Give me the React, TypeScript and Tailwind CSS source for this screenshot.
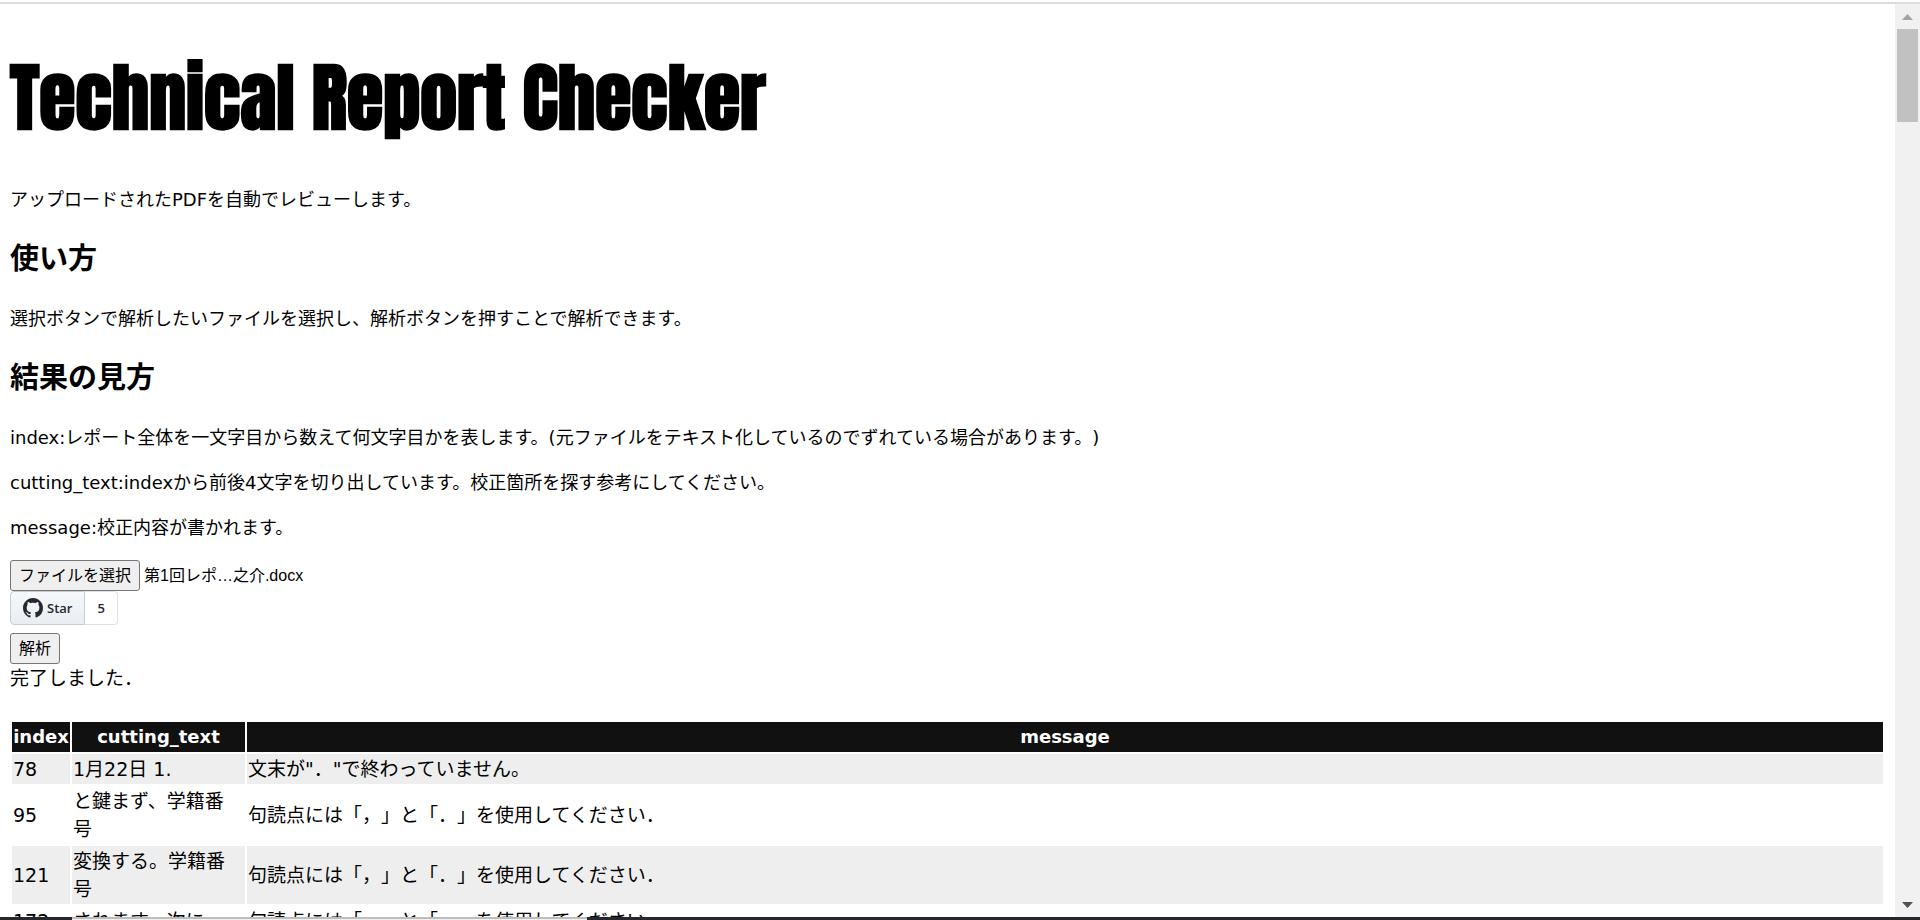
const rows = [
  { index: 78, text: '1月22日 1.', message: '文末が"．"で終わっていません。' },
  { index: 95, text: 'と鍵まず、学籍番号', message: '句読点には「，」と「．」を使用してください．' },
  { index: 121, text: '変換する。学籍番号', message: '句読点には「，」と「．」を使用してください．' },
  { index: 172, text: 'されます、次に', message: '句読点には「，」と「．」を使用してください．' },
];

const buttonClass =
  'flex h-[31px] items-center rounded-[3px] border border-[#767676] bg-[#efefef] px-2 text-base leading-none';
const cellClass = 'py-px pr-1 pl-px';

function StarButton() {
  return (
    <div className="mb-2 flex h-[34px] font-['Open_Sans',sans-serif] text-[13px] font-semibold text-[#24292e]">
      <a href="#star" className="flex items-center gap-1 rounded-l-[4px] border border-[#c5ccd3] bg-linear-to-b from-[#f6f8fa] to-[#e9eef3] px-3">
        <svg viewBox="0 0 16 16" className="size-5" fill="currentColor" aria-hidden="true">
          <path d="M8 0C3.58 0 0 3.58 0 8c0 3.54 2.29 6.53 5.47 7.59.4.07.55-.17.55-.38 0-.19-.01-.82-.01-1.49-2.01.37-2.53-.49-2.69-.94-.09-.23-.48-.94-.82-1.13-.28-.15-.68-.52-.01-.53.63-.01 1.08.58 1.23.82.72 1.21 1.87.87 2.33.66.07-.52.28-.87.51-1.07-1.78-.2-3.64-.89-3.64-3.95 0-.87.31-1.59.82-2.15-.08-.2-.36-1.02.08-2.12 0 0 .67-.21 2.2.82.64-.18 1.32-.27 2-.27s1.36.09 2 .27c1.53-1.04 2.2-.82 2.2-.82.44 1.1.16 1.92.08 2.12.51.56.82 1.27.82 2.15 0 3.07-1.87 3.75-3.65 3.95.29.25.54.73.54 1.48 0 1.07-.01 1.93-.01 2.2 0 .21.15.46.55.38A8.01 8.01 0 0 0 16 8c0-4.42-3.58-8-8-8z" />
        </svg>
        Star
      </a>
      <a href="#stargazers" className="flex items-center rounded-r-[4px] border border-l-0 border-[#dfe2e5] bg-white px-3">5</a>
    </div>
  );
}

export default function App() {
  return (
    <div className="flex h-screen flex-col overflow-hidden bg-white font-['DejaVu_Sans','Noto_Sans_CJK_JP',sans-serif] text-[19px] leading-7 text-black [text-spacing-trim:space-all]">
      <div className="mt-[2px] h-[2px] shrink-0 bg-[#dcdcdc]" />
      <div className="flex min-h-0 flex-1">
        <main className="min-w-0 flex-1 overflow-hidden px-[10px]">
          <h1 className="mt-10 font-['Impact','Anton',sans-serif] text-[74px] leading-[108px] font-bold whitespace-nowrap">
            Technical Report Checker
          </h1>
          <div className="mt-[34px] text-[18px] leading-[27px]">
            <p>アップロードされたPDFを自動でレビューします。</p>
            <h2 className="my-6 text-[29px] leading-[44px] font-bold">使い方</h2>
            <p>選択ボタンで解析したいファイルを選択し、解析ボタンを押すことで解析できます。</p>
            <h2 className="my-6 text-[29px] leading-[44px] font-bold">結果の見方</h2>
            <p>index:レポート全体を一文字目から数えて何文字目かを表します。(元ファイルをテキスト化しているのでずれている場合があります。)</p>
            <p className="my-[18px]">cutting_text:indexから前後4文字を切り出しています。校正箇所を探す参考にしてください。</p>
            <p>message:校正内容が書かれます。</p>
          </div>
          <div className="relative mt-[19px] flex items-center gap-1 text-base">
            <input id="report" type="file" className="sr-only" />
            <label htmlFor="report" className={buttonClass}>ファイルを選択</label>
            <span className="font-['Liberation_Sans','Noto_Sans_CJK_JP',sans-serif]">第1回レポ…之介.docx</span>
          </div>
          <StarButton />
          <button type="button" className={buttonClass}>解析</button>
          <p>完了しました．</p>
          <table className="mt-7 w-full table-fixed border-separate border-spacing-[2px]">
            <colgroup>
              <col className="w-[58px]" />
              <col className="w-[173px]" />
              <col />
            </colgroup>
            <thead>
              <tr className="bg-[#111] text-[18px] font-bold text-white">
                <th className="p-px">index</th>
                <th className="p-px">cutting_text</th>
                <th className="p-px">message</th>
              </tr>
            </thead>
            <tbody>
              {rows.map((row) => (
                <tr key={row.index} className="odd:bg-[#eee]">
                  <td className={cellClass}>{row.index}</td>
                  <td className={cellClass}>{row.text}</td>
                  <td className={cellClass}>{row.message}</td>
                </tr>
              ))}
            </tbody>
          </table>
        </main>
        <div className="flex w-[25px] shrink-0 flex-col items-center bg-[#f1f1f1]" aria-hidden="true">
          <svg viewBox="0 0 25 25" className="size-[25px]"><path d="M7 16h11l-5.5-6z" fill="#a3a3a3" /></svg>
          <div className="h-[93px] w-[21px] bg-[#c1c1c1]" />
          <svg viewBox="0 0 25 25" className="mt-auto size-[25px]"><path d="M7 10h11l-5.5 6z" fill="#505050" /></svg>
        </div>
      </div>
      <div className="flex h-[3px] shrink-0 bg-[#25282c]">
        <div className="ml-[72px] w-[515px] border-t-2 border-[#bdbdbd] bg-[#f1f1f1]" />
      </div>
    </div>
  );
}
